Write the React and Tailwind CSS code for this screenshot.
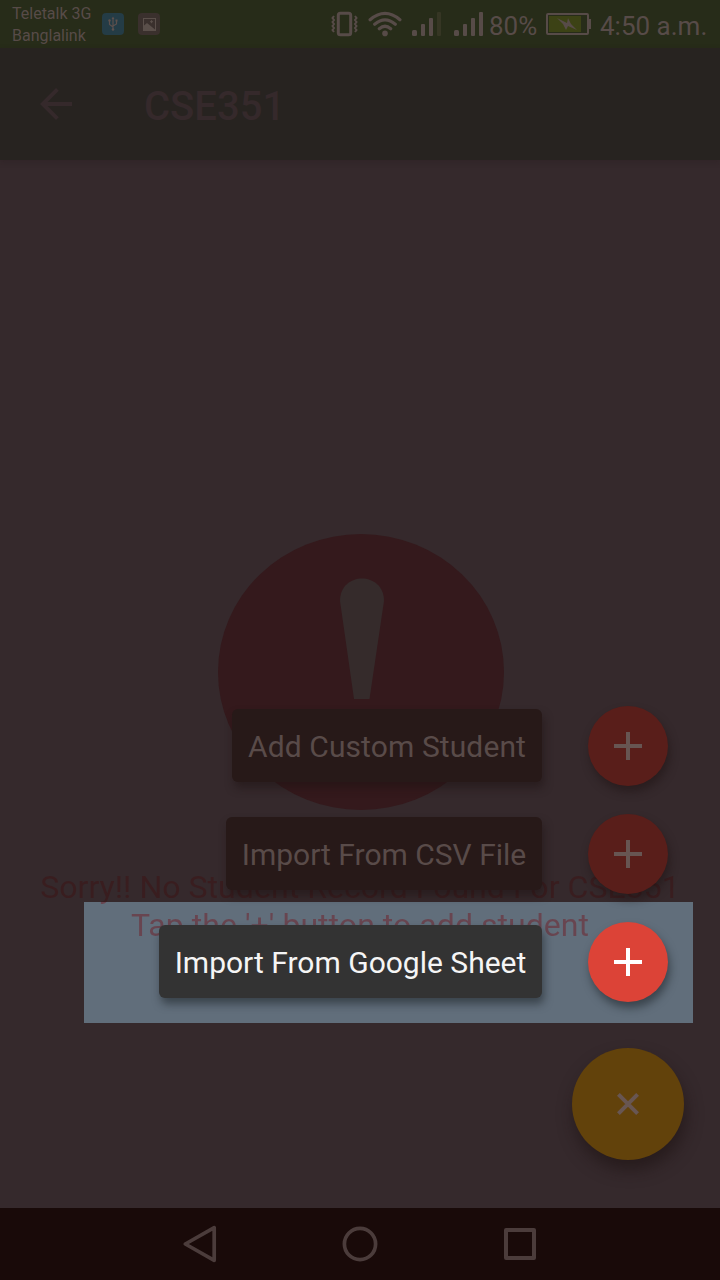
import React from "react";

function StatusBar() {
  return (
    <header className="flex h-12 shrink-0 items-center bg-[#272c19] text-[#574b48]">
      <div className="ml-3 mt-[1px] w-[90px] text-[16px] leading-[22px] whitespace-nowrap">
        <div>Teletalk 3G</div>
        <div>Banglalink</div>
      </div>
      <div className="flex h-[22px] w-[22px] items-center justify-center rounded-[4px] bg-[#243c46]">
        <svg width="10" height="16" viewBox="0 0 10 16" fill="none" stroke="#5c504d" strokeWidth="1.2">
          <path d="M5 2v12M1.5 5v3.5L5 11M8.5 4.500v3.500L5 10" />
          <circle cx="5" cy="13.500" r="1.300" fill="#5c504d" stroke="none" />
          <circle cx="1.500" cy="4.500" r="1.200" fill="#5c504d" stroke="none" />
          <path d="M7.500 3.500h2v2h-2zM3.600 3L5 .6 6.400 3z" fill="#5c504d" stroke="none" />
        </svg>
      </div>
      <div className="ml-[14px] flex h-[22px] w-[22px] items-center justify-center rounded-[4px] bg-[#3a302d]">
        <svg width="13" height="13" viewBox="0 0 13 13">
          <rect x=".5" y=".5" width="12" height="12" fill="none" stroke="#5a4f4a" />
          <path d="M1 7.500L4 5l8 6.500v.5H1z" fill="#5a4f4a" />
          <path d="M8.500 2.200v3M7 3.700h3" stroke="#5a4f4a" />
        </svg>
      </div>
      <svg className="ml-[171px] shrink-0" width="28" height="26" viewBox="0 0 28 26" fill="none" stroke="#574b48">
        <rect x="7.300" y="2.300" width="12.400" height="21.400" rx="2" strokeWidth="3" />
        <path d="M3 5l-1.500 2L3 9l-1.500 2L3 13l-1.500 2L3 17l-1.500 2L3 21M24 5l1.500 2L24 9l1.500 2L24 13l1.500 2L24 17l1.500 2L24 21" strokeWidth="2" />
      </svg>
      <svg className="ml-[9px] shrink-0" width="34" height="26" viewBox="0 0 34 26" fill="none" stroke="#574b48" strokeWidth="3.200" strokeLinecap="round">
        <path d="M2.100 8.700Q17-4 31.900 8.700M6.700 13.200Q17 4.500 27.300 13.200M11.300 17.700Q17 12.800 22.700 17.700" />
        <circle cx="17" cy="22.400" r="2.800" fill="#574b48" stroke="none" />
      </svg>
      <svg className="ml-[10px] shrink-0" width="30" height="24" viewBox="0 0 30 24" fill="#574b48">
        <rect x="0" y="18" width="5" height="6" rx="1.500" />
        <rect x="9" y="12" width="4" height="12" rx="1" />
        <rect x="17" y="6" width="4" height="18" rx="1" />
        <rect x="25" y="0" width="4" height="24" rx="1" fill="#363624" />
      </svg>
      <svg className="ml-3 shrink-0" width="30" height="24" viewBox="0 0 30 24" fill="#574b48">
        <rect x="0" y="18" width="5" height="6" rx="1.500" />
        <rect x="9" y="12" width="4" height="12" rx="1" />
        <rect x="17" y="6" width="4" height="18" rx="1" />
        <rect x="25" y="0" width="4" height="24" rx="1" />
      </svg>
      <span className="ml-[5px] mt-[4px] w-[57px] text-[26px] leading-none">80%</span>
      <svg className="shrink-0" width="45" height="22" viewBox="0 0 45 22">
        <rect x="1" y="1" width="41" height="20" rx="1" fill="none" stroke="#574b48" strokeWidth="2" />
        <rect x="3" y="3" width="32" height="16" fill="#3c4215" />
        <path d="M43 6h2v10h-2z" fill="#574b48" />
        <path d="M11 5l10 5 1-5 3 6 6 6-9-4-2 4-3-6z" fill="#574b48" />
      </svg>
      <span className="ml-[9px] mt-[4px] text-[26px] leading-none whitespace-nowrap">4:50 a.m.</span>
    </header>
  );
}

function AppBar() {
  return (
    <div className="z-10 flex h-28 shrink-0 items-center bg-[#272320] text-[#35292b] shadow-[0_2px_6px_rgba(30,20,20,0.2)]">
      <svg className="ml-8 shrink-0" width="48" height="48" viewBox="0 0 24 24" fill="currentColor">
        <path d="M20 11H7.830l5.590-5.590L12 4l-8 8 8 8 1.410-1.410L7.830 13H20z" />
      </svg>
      <h1 className="ml-16 mt-[5px] text-[40px] leading-none font-medium">CSE351</h1>
    </div>
  );
}

function EmptyState() {
  return (
    <div className="relative flex flex-col items-center pt-[374px]">
      <svg className="ml-[2px]" width="286" height="276" viewBox="0 0 286 276">
        <ellipse cx="143" cy="138" rx="143" ry="138" fill="#34191c" />
        <path d="M122 67C122 37 166 37 166 67L151.500 165H136Z" fill="#352b2b" />
      </svg>
      <p className="mt-[58px] bg-linear-to-b from-[#391d1f] from-[34px] to-[#684550] to-[34px] bg-clip-text text-center text-[32px] leading-[38px] tracking-[0.05px] whitespace-nowrap text-transparent">
        Sorry!! No Student Record Found For CSE351
        <br />
        Tap the '+' button to add student
      </p>
    </div>
  );
}

function Plus() {
  return (
    <svg width="28" height="28" viewBox="0 0 28 28" stroke="currentColor" strokeWidth="4">
      <path d="M14 0v28M0 14h28" />
    </svg>
  );
}

function Action({ label, active, size }) {
  return (
    <div className="flex h-20 items-center gap-[46px]">
      <span
        className={
          "mt-[-1px] flex h-[73px] items-center justify-center rounded-[6px] pt-[2px] text-[30px] leading-none whitespace-nowrap " +
          size +
          (active
            ? " bg-[#333333] text-[#f5f5f5] shadow-[2px_6px_8px_rgba(20,25,30,0.5)]"
            : " bg-[#271918] text-[#594b49] shadow-[2px_6px_8px_rgba(30,18,18,0.5)]")
        }
      >
        {label}
      </span>
      <button
        className={
          "flex h-20 w-20 items-center justify-center rounded-full " +
          (active
            ? "bg-[#dc4337] text-white shadow-[2px_6px_8px_rgba(20,25,30,0.5)]"
            : "bg-[#591e1a] text-[#675552] shadow-[2px_6px_8px_rgba(30,18,18,0.5)]")
        }
      >
        <Plus />
      </button>
    </div>
  );
}

function ActionMenu() {
  return (
    <div className="absolute right-9 bottom-12 flex flex-col items-end">
      <div className="mr-4 flex flex-col items-end gap-7">
        <Action label="Add Custom Student" size="w-[310px] tracking-[0.1px]" />
        <Action label="Import From CSV File" size="w-[316px]" />
        <Action label="Import From Google Sheet" size="w-[383px]" active />
      </div>
      <button className="mt-[46px] flex h-28 w-28 items-center justify-center rounded-full bg-[#62420b] text-[#685652] shadow-[2px_10px_16px_rgba(30,18,18,0.6)]">
        <svg width="22" height="22" viewBox="0 0 22 22" stroke="currentColor" strokeWidth="4">
          <path d="M1.400 1.400l19.200 19.200M20.600 1.400L1.400 20.600" />
        </svg>
      </button>
    </div>
  );
}

function NavBar() {
  return (
    <nav className="flex h-[72px] shrink-0 items-center justify-center gap-[120px] bg-[#190a09]">
      <svg width="40" height="40" viewBox="0 0 40 40" fill="none" stroke="#4b3c3b" strokeWidth="3.7" strokeLinejoin="round">
        <path d="M34.200 3.700v32.600L5.300 20z" />
      </svg>
      <svg width="40" height="40" viewBox="0 0 40 40" fill="none" stroke="#4b3c3b" strokeWidth="3.700">
        <circle cx="20" cy="20" r="15.600" />
      </svg>
      <svg width="40" height="40" viewBox="0 0 40 40" fill="none" stroke="#4b3c3b" strokeWidth="4" strokeLinejoin="round">
        <rect x="6" y="6" width="28" height="28" />
      </svg>
    </nav>
  );
}

export default function App() {
  return (
    <div className="flex h-[1280px] w-[720px] flex-col overflow-hidden bg-[#35292c] font-['Roboto',sans-serif]">
      <StatusBar />
      <AppBar />
      <main className="relative h-[1048px] shrink-0">
        <div className="absolute right-[27px] bottom-[185px] h-[121px] w-[609px] bg-[#616e7b]" />
        <EmptyState />
        <ActionMenu />
      </main>
      <NavBar />
    </div>
  );
}
